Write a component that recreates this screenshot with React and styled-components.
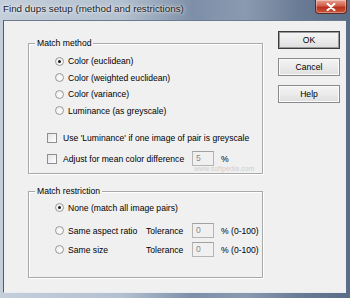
import styled, { createGlobalStyle } from "styled-components";

const Global = createGlobalStyle`
    html, body { margin: 0; padding: 0; }
    body {
        font-family: "Liberation Sans", Arial, sans-serif;
        background: #5d6e86;
    }
`

const Window = styled.div`
    width: 350px;
    height: 298px;
    display: flex;
    flex-direction: column;
    overflow: hidden;
    background: linear-gradient(90deg, #c4cfdb 0%, #b3c0cf 35%, #7d8fa8 55%, #8a9ab0 70%, #6b7d96 85%, #5a6c86 100%);
`

const TitleBar = styled.div`
    height: 20px;
    flex: none;
    display: flex;
    align-items: flex-start;
    padding-left: 3px;
`

const Title = styled.div`
    font-size: 9.8px;
    line-height: 17px;
    color: #1a1a1a;
    text-shadow: 0 0 5px rgba(255,255,255,0.9), 0 0 2px rgba(255,255,255,0.8);
`

const CloseButton = styled.div`
    margin-left: auto;
    margin-right: 3px;
    width: 32px;
    height: 14px;
    border: 1px solid #5a2a22;
    border-top: none;
    border-radius: 0 0 4px 4px;
    background: linear-gradient(180deg, #e8a090 0%, #d0604a 45%, #b8321c 55%, #c8553c 100%);
    display: flex;
    align-items: center;
    justify-content: center;
    box-sizing: border-box;
    box-shadow: inset 0 0 0 1px rgba(255,255,255,0.35);
`

const Client = styled.div`
    flex: 1;
    margin: 0 4px 5px 3px;
    background: #f0f0f0;
    display: flex;
    align-items: flex-start;
    padding: 22px 0 0 24px;
    position: relative;
    border: 1px solid #6c7a8d;
    border-left-color: #4f5c6e;
    border-right: none;
    border-bottom-color: #e9ecf0;
`

const Groups = styled.div`
    width: 235px;
    display: flex;
    flex-direction: column;
    gap: 17px;
`

const GroupBox = styled.div`
    position: relative;
    height: ${p => p.$height}px;
    box-sizing: border-box;
    border: 1px solid #a9a9a9;
    box-shadow: inset 1px 1px 0 #ffffff, 1px 1px 0 #ffffff;
    padding: ${p => p.$padTop}px 0 0 0;
    display: flex;
    flex-direction: column;
`

const GroupLabel = styled.span`
    position: absolute;
    top: -6px;
    left: 6px;
    padding: 0 2px;
    background: #f0f0f0;
    font-size: 8.6px;
    line-height: 11px;
    color: #000;
`

const RadioRow = styled.label`
    display: flex;
    align-items: center;
    height: ${p => p.$h || 16.5}px;
    padding-left: 26px;
    font-size: 8.6px;
    color: #000;
    gap: 4px;
    white-space: nowrap;
    margin-bottom: ${p => p.$mb || 0}px;
`

const Radio = styled.span`
    width: 9px;
    height: 9px;
    flex: none;
    box-sizing: border-box;
    border-radius: 50%;
    border: 1px solid #9a9a9a;
    background: radial-gradient(circle at 60% 60%, #ffffff 0%, #e6e6e6 100%);
    display: flex;
    align-items: center;
    justify-content: center;
    &::after {
        content: "";
        width: 3px;
        height: 3px;
        border-radius: 50%;
        background: ${p => (p.$checked ? "#1a1a1a" : "transparent")};
    }
`

const CheckRow = styled.label`
    display: flex;
    align-items: center;
    height: 17px;
    padding-left: 18px;
    font-size: 8.6px;
    color: #000;
    white-space: nowrap;
    margin-top: ${p => p.$mt || 0}px;
`

const CheckBox = styled.span`
    width: 10px;
    height: 10px;
    flex: none;
    box-sizing: border-box;
    border: 1px solid #8e8e8e;
    background: linear-gradient(135deg, #e4e4e4 0%, #ffffff 100%);
    margin-right: 6px;
`

const RowText = styled.span`
    width: ${p => (p.$w ? `${p.$w}px` : "auto")};
    flex: none;
    white-space: nowrap;
`

const NumBox = styled.span`
    width: 22px;
    height: 15px;
    flex: none;
    box-sizing: border-box;
    border: 1px solid #b5b5b5;
    border-top-color: #a0a0a0;
    background: #f0f0f0;
    color: #8a8a8a;
    font-size: 8.6px;
    line-height: 13px;
    padding-left: 3px;
    margin-right: ${p => (p.$mr != null ? p.$mr : 7)}px;
`

const Buttons = styled.div`
    margin: -12px 0 0 15px;
    display: flex;
    flex-direction: column;
    gap: 9px;
`

const Button = styled.div`
    width: 62px;
    height: 18px;
    box-sizing: border-box;
    border: 1px solid ${p => (p.$default ? "#3c3c3c" : "#8a8a8a")};
    box-shadow: ${p => (p.$default ? "inset 0 0 0 1px #9a9a9a" : "inset 0 0 0 1px #fcfcfc")};
    background: linear-gradient(180deg, #f4f4f4 0%, #ebebeb 50%, #dedede 100%);
    font-size: 8.6px;
    color: #000;
    display: flex;
    align-items: center;
    justify-content: center;
`

const Watermark = styled.span`
    position: absolute;
    left: 190px;
    top: 144px;
    pointer-events: none;
    font-size: 7px;
    color: rgba(175,175,175,0.55);
`

const Dialog = () => {
    return (
        <Window>
            <TitleBar>
                <Title>Find dups setup (method and restrictions)</Title>
                <CloseButton>
                    <svg width="10" height="8" viewBox="0 0 10 8">
                        <path d="M1.5 0.8 L8.5 7.2 M8.5 0.8 L1.5 7.2" stroke="#fff" strokeWidth="2" strokeLinecap="round" />
                    </svg>
                </CloseButton>
            </TitleBar>
            <Client>
                <Groups>
                    <GroupBox $height={131} $padTop={9}>
                        <GroupLabel>Match method</GroupLabel>
                        <RadioRow><Radio $checked />Color (euclidean)</RadioRow>
                        <RadioRow><Radio />Color (weighted euclidean)</RadioRow>
                        <RadioRow><Radio />Color (variance)</RadioRow>
                        <RadioRow><Radio />Luminance (as greyscale)</RadioRow>
                        <CheckRow $mt={10}><CheckBox /><RowText>Use 'Luminance' if one image of pair is greyscale</RowText></CheckRow>
                        <CheckRow $mt={4}><CheckBox /><RowText $w={129}>Adjust for mean color difference</RowText><NumBox>5</NumBox>%</CheckRow>
                    </GroupBox>
                    <GroupBox $height={87} $padTop={7}>
                        <GroupLabel>Match restriction</GroupLabel>
                        <RadioRow $h={17} $mb={5}><Radio $checked />None (match all image pairs)</RadioRow>
                        <RadioRow $h={19}><Radio /><RowText $w={74}>Same aspect ratio</RowText><RowText $w={42}>Tolerance</RowText><NumBox $mr={3}>0</NumBox>% (0-100)</RadioRow>
                        <RadioRow $h={19}><Radio /><RowText $w={74}>Same size</RowText><RowText $w={42}>Tolerance</RowText><NumBox $mr={3}>0</NumBox>% (0-100)</RadioRow>
                    </GroupBox>
                </Groups>
                <Buttons>
                    <Button $default>OK</Button>
                    <Button>Cancel</Button>
                    <Button>Help</Button>
                </Buttons>
                <Watermark>www.softpedia.com</Watermark>
            </Client>
        </Window>
    );
}

export default function App() {
    return (
        <>
            <Global />
            <Dialog />
        </>
    );
}
